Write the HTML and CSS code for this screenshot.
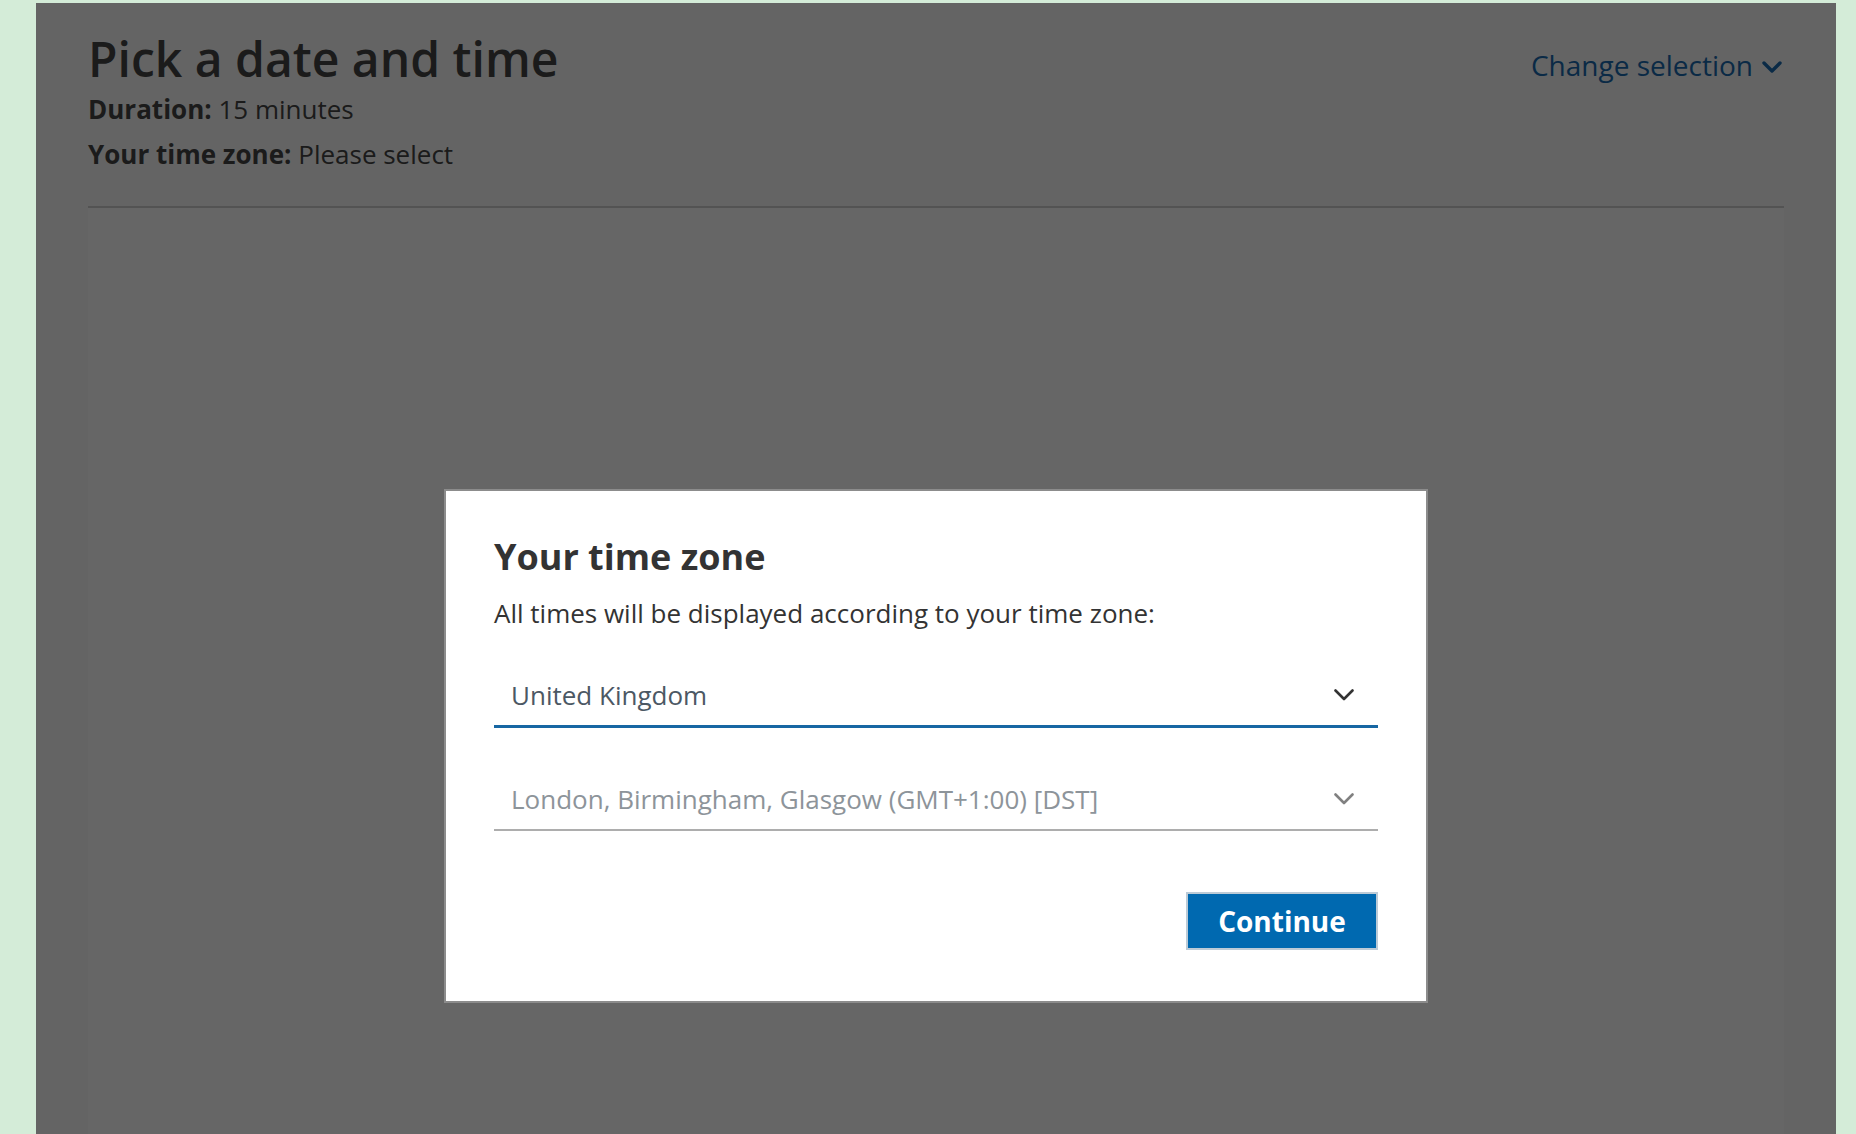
FILE: index.html
```html
<!DOCTYPE html>
<html lang="en">
<head>
<meta charset="utf-8">
<title>Pick a date and time</title>
<link rel="stylesheet" href="styles.css">
</head>
<body>
<div class="frame">
  <main class="panel">
    <header class="page-head">
      <div class="head-text">
        <h1 class="page-title">Pick a date and time</h1>
        <p class="meta"><strong>Duration:</strong> 15 minutes</p>
        <p class="meta"><strong>Your time zone:</strong> Please select</p>
      </div>
      <a class="change-link" href="#">Change selection
        <svg class="link-chevron" viewBox="0 0 20 12" width="20" height="12" aria-hidden="true"><path d="M2 2 L10 10 L18 2" fill="none" stroke="currentColor" stroke-width="3.4" stroke-linecap="round" stroke-linejoin="round"/></svg>
      </a>
    </header>
    <hr class="divider">
    <section class="calendar-area"></section>

    <div class="overlay"></div>

    <div class="modal" role="dialog" aria-labelledby="tz-title">
      <h2 class="modal-title" id="tz-title">Your time zone</h2>
      <p class="modal-text">All times will be displayed according to your time zone:</p>
      <div class="select select-active">
        <span class="select-value">United Kingdom</span>
        <svg class="select-chevron" viewBox="0 0 20 12" width="20" height="12" aria-hidden="true"><path d="M1.5 1.5 L10 10 L18.5 1.5" fill="none" stroke="currentColor" stroke-width="2.6" stroke-linecap="round" stroke-linejoin="round"/></svg>
      </div>
      <div class="select select-muted">
        <span class="select-value">London, Birmingham, Glasgow (GMT+1:00) [DST]</span>
        <svg class="select-chevron" viewBox="0 0 20 12" width="20" height="12" aria-hidden="true"><path d="M1.5 1.5 L10 10 L18.5 1.5" fill="none" stroke="currentColor" stroke-width="2.6" stroke-linecap="round" stroke-linejoin="round"/></svg>
      </div>
      <div class="modal-actions">
        <button class="btn-primary" type="button">Continue</button>
      </div>
    </div>
  </main>
</div>
</body>
</html>
```

FILE: styles.css
```css
* { box-sizing: border-box; }

html, body {
  margin: 0;
  height: 100%;
}

body {
  background: #d4ecd8;
  font-family: "Open Sans", "Noto Sans", Arial, sans-serif;
  color: #444;
  overflow: hidden;
}

.frame {
  padding: 3px 20px 0 36px;
  height: 100%;
}

.panel {
  position: relative;
  height: 100%;
  background: #fafbfa;
  padding: 28px 52px 0;
  display: flex;
  flex-direction: column;
  overflow: hidden;
}

.page-head {
  display: flex;
  justify-content: space-between;
  align-items: flex-start;
}

.page-title {
  margin: 0;
  font-size: 48px;
  line-height: 56px;
  font-weight: 600;
  color: #454545;
}

.meta {
  margin: 0;
  font-size: 26px;
  line-height: 45px;
  color: #454545;
}

.meta strong { font-weight: 700; }

.change-link {
  margin-top: 14px;
  margin-right: 2px;
  display: flex;
  align-items: center;
  gap: 9px;
  font-size: 28px;
  line-height: 40px;
  color: #1b6aae;
  text-decoration: none;
}

.link-chevron { margin-top: 3px; }

.divider {
  margin: 29px 0 0;
  border: 0;
  border-top: 2px solid #cfcfcf;
}

.calendar-area {
  flex: 1;
  background: #fff;
}

.overlay {
  position: absolute;
  inset: 0;
  background: rgba(0, 0, 0, 0.6);
}

.modal {
  position: absolute;
  left: 408px;
  top: 486px;
  width: 984px;
  height: 514px;
  background: #fff;
  border: 2px solid #8c8c8c;
  padding: 44px 48px 0;
  display: flex;
  flex-direction: column;
}

.modal-title {
  margin: 0;
  font-size: 36px;
  line-height: 44px;
  font-weight: 700;
  color: #333;
}

.modal-text {
  margin: 17px 0 0;
  font-size: 26px;
  line-height: 34px;
  color: #333;
}

.select {
  display: flex;
  align-items: center;
  justify-content: space-between;
  padding: 12px 24px 12px 17px;
  font-size: 26px;
  line-height: 36px;
}

.select-active {
  margin-top: 35px;
  border-bottom: 3px solid #1767a3;
  color: #4c5864;
}

.select-active .select-chevron { color: #333; }

.select-muted {
  margin-top: 41px;
  border-bottom: 2px solid #adadad;
  color: #8d949a;
}

.select-muted .select-chevron { color: #808080; }

.modal-actions {
  margin-top: 61px;
  display: flex;
  justify-content: flex-end;
}

.btn-primary {
  height: 58px;
  width: 192px;
  border: 2px solid #bccbd7;
  background: #0069b0;
  color: #fff;
  font-family: inherit;
  font-size: 28px;
  font-weight: 700;
  padding: 0;
  cursor: pointer;
}
```
